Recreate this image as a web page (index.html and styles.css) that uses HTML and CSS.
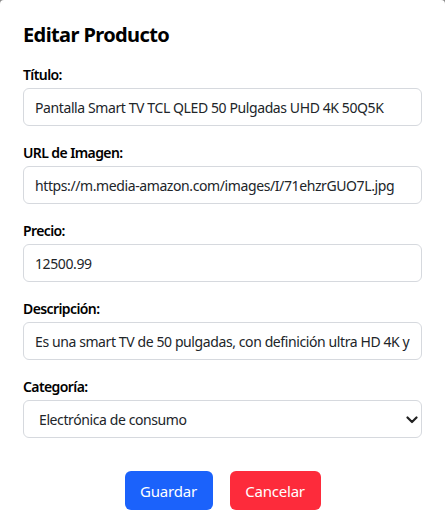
FILE: index.html
```html
<!DOCTYPE html>
<html lang="es">
<head>
<meta charset="utf-8">
<title>Editar Producto</title>
<link rel="stylesheet" href="styles.css">
</head>
<body>
<div class="modal">
  <h2 class="title">Editar Producto</h2>
  <form class="form">
    <div class="field">
      <label class="label" for="t">Título:</label>
      <input class="control" id="t" type="text" value="Pantalla Smart TV TCL QLED 50 Pulgadas UHD 4K 50Q5K">
    </div>
    <div class="field">
      <label class="label" for="u">URL de Imagen:</label>
      <input class="control" id="u" type="text" value="https://m.media-amazon.com/images/I/71ehzrGUO7L.jpg">
    </div>
    <div class="field">
      <label class="label" for="p">Precio:</label>
      <input class="control" id="p" type="text" value="12500.99">
    </div>
    <div class="field">
      <label class="label" for="d">Descripción:</label>
      <input class="control" id="d" type="text" value="Es una smart TV de 50 pulgadas, con definición ultra HD 4K y tecnología QLED">
    </div>
    <div class="field">
      <label class="label" for="c">Categoría:</label>
      <div class="select-wrap">
        <select class="control select" id="c">
          <option>Electrónica de consumo</option>
        </select>
        <svg class="chev" width="12" height="8" viewBox="0 0 12 8"><path d="M1.5 1.5 6 6l4.5-4.5" fill="none" stroke="#222" stroke-width="2.2" stroke-linecap="round" stroke-linejoin="round"/></svg>
      </div>
    </div>
    <div class="actions">
      <button type="button" class="btn btn-primary">Guardar</button>
      <button type="button" class="btn btn-danger">Cancelar</button>
    </div>
  </form>
</div>
</body>
</html>
```
FILE: styles.css
```css
* { box-sizing: border-box; }
html, body { margin: 0; height: 100%; }
body {
  background: #8a8a8a;
  font-family: "Noto Sans", "Open Sans", sans-serif;
  color: #212529;
}
.modal {
  background: #fff;
  min-height: 100%;
  border-radius: 4px 4px 0 0;
  padding: 22px 23px 20px 23px;
}
.title {
  margin: 0 0 16px 0;
  font-size: 20px;
  line-height: 26px;
  font-weight: 700;
  letter-spacing: -0.6px;
  color: #000;
}
.form { display: flex; flex-direction: column; }
.field { display: flex; flex-direction: column; margin-bottom: 16px; }
.label {
  font-size: 14px;
  line-height: 21px;
  font-weight: 600;
  letter-spacing: -0.6px;
  color: #000;
  margin-bottom: 3px;
}
.control {
  width: 100%;
  height: 38px;
  border: 1px solid #d6d9de;
  border-radius: 6px;
  padding: 0 11px;
  font-family: inherit;
  font-size: 14px;
  letter-spacing: -0.4px;
  color: #212529;
  background: #fff;
  outline: none;
}
.select-wrap { position: relative; }
.select {
  appearance: none;
  -webkit-appearance: none;
  padding-left: 15px;
}
.chev { position: absolute; right: 4px; top: 16px; }
.actions {
  display: flex;
  justify-content: center;
  gap: 17px;
  margin-top: 17px;
}
.btn {
  height: 39px;
  border: none;
  border-radius: 6px;
  padding: 0 12px;
  font-family: inherit;
  font-size: 15px;
  letter-spacing: -0.2px;
  color: #fff;
}
.btn-primary { background: #1b62fb; width: 88px; }
.btn-danger { background: #fd2b3b; width: 91px; }
```
